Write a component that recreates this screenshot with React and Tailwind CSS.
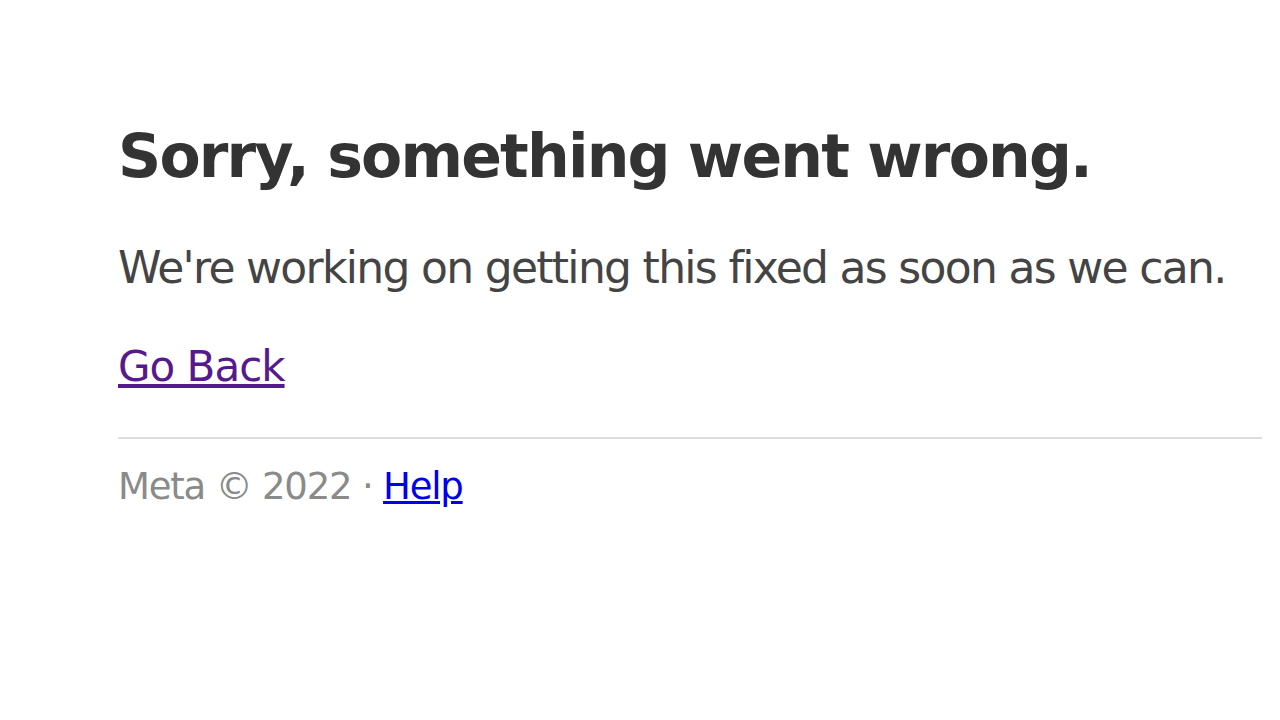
export default function App() {
  return (
    <div className="min-h-[720px] bg-white">
      <div className="pl-[118px] pr-[18px] pt-[116px] font-['DejaVu_Sans',sans-serif]">
        <h1 className="text-[60px] font-bold leading-[80px] text-[#333333] tracking-[-1.8px]">Sorry, something went wrong.</h1>
        <p className="mt-[44px] text-[44px] leading-[56px] text-[#444444] tracking-[-1.7px]">We're working on getting this fixed as soon as we can.</p>
        <p className="mt-[43px] text-[42px] leading-[56px] tracking-[-1px]">
          <a href="#" className="text-[#551a8b] underline">Go Back</a>
        </p>
        <hr className="mt-[42px] border-0 h-[2px] bg-[#dddddd]" />
        <p className="mt-[23px] text-[37px] leading-[50px] text-[#8a8a8a] tracking-[-1.2px]">
          Meta © 2022 · <a href="#" className="text-[#0000ee] underline">Help</a>
        </p>
      </div>
    </div>
  );
}
